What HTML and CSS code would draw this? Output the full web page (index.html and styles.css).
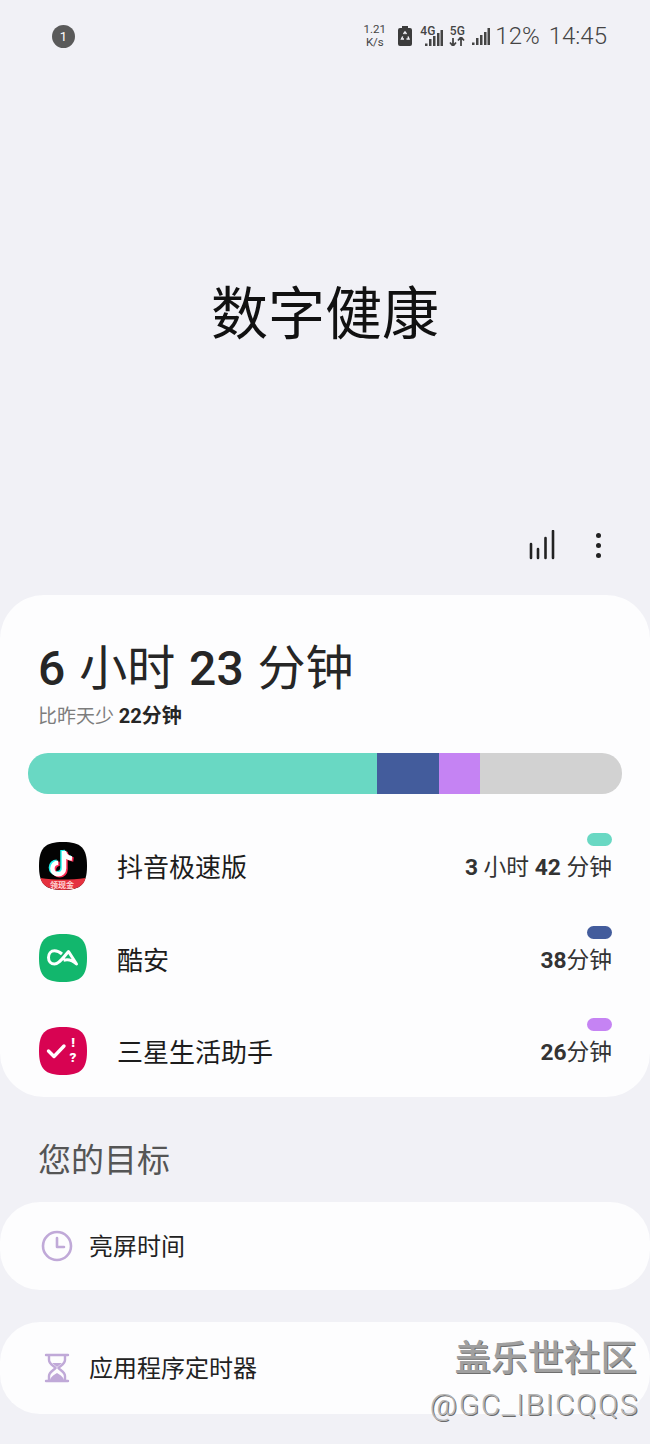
FILE: index.html
```html
<!DOCTYPE html>
<html lang="zh-CN">
<head>
    <meta charset="UTF-8">
    <meta name="viewport" content="width=device-width, initial-scale=1.0">
    <title>数字健康</title>
    <link rel="stylesheet" href="styles.css">
</head>
<body>
    <div class="status-bar">
        <div class="notice-badge">1</div>
        <div class="status-right">
            <div class="net-speed"><span>1.21</span><span>K/s</span></div>
            <svg class="battery-saver" width="14" height="20" viewBox="0 0 14 20">
                <path d="M4 0h6v2h2a2 2 0 0 1 2 2v14a2 2 0 0 1-2 2H2a2 2 0 0 1-2-2V4a2 2 0 0 1 2-2h2z" fill="#3c3c3c"/>
                <path d="M5.500 8L7 6l1.500 2M10 10.500l1 2.500H8.500M6 13H3.500l1.200-2.500" fill="none" stroke="#f1f1f6" stroke-width="1.400"/>
            </svg>
            <div class="sim-signal">
                <span class="sim-label">4G</span>
                <svg width="18" height="16" viewBox="0 0 18 16">
                    <rect x="0" y="13.500" width="2.500" height="2.500" fill="#444"/>
                    <rect x="4" y="9" width="2.500" height="7" fill="#444"/>
                    <rect x="8" y="6" width="2.500" height="10" fill="#444"/>
                    <rect x="12" y="3" width="2.500" height="13" fill="#444"/>
                    <rect x="15.500" y="0" width="2.500" height="16" fill="#444"/>
                </svg>
            </div>
            <div class="sim-five">
                <span class="sim-label">5G</span>
                <svg width="16" height="9" viewBox="0 0 16 9">
                    <path d="M4 9V1M1 5.500L4 9l3-3.500M12 0v9M9 3.500L12 0l3 3.500" fill="none" stroke="#444" stroke-width="1.800"/>
                </svg>
            </div>
            <svg class="plain-signal" width="18" height="17" viewBox="0 0 18 17">
                <rect x="0" y="14.500" width="2.500" height="2.500" fill="#444"/>
                <rect x="4" y="10" width="2.500" height="7" fill="#444"/>
                <rect x="8" y="7" width="2.500" height="10" fill="#444"/>
                <rect x="12" y="4" width="2.500" height="13" fill="#444"/>
                <rect x="15.500" y="0" width="2.500" height="17" fill="#444"/>
            </svg>
            <span class="status-text battery">12%</span>
            <span class="status-text">14:45</span>
        </div>
    </div>

    <div class="hero">
        <h1>数字健康</h1>
    </div>

    <div class="actions">
        <svg width="26" height="30" viewBox="0 0 26 30">
            <path d="M2 14v14M9 19v9M16.500 8v20M24 1v27" fill="none" stroke="#222" stroke-width="2.600" stroke-linecap="round"/>
        </svg>
        <div class="more-dots"><i></i><i></i><i></i></div>
    </div>

    <section class="card usage-card">
        <div class="total-time"><b>6</b> 小时 <b>23</b> 分钟</div>
        <div class="compare">比昨天少 <b>22分钟</b></div>

        <div class="usage-bar">
            <div class="seg seg-teal"></div>
            <div class="seg seg-blue"></div>
            <div class="seg seg-purple"></div>
            <div class="seg seg-rest"></div>
        </div>

        <div class="app-row">
            <svg class="app-icon" viewBox="0 0 48 48">
                <path d="M24 0C42 0 48 6 48 24S42 48 24 48 0 42 0 24 6 0 24 0z" fill="#030303"/>
                <path d="M1.500 36c14 2 30 2 45 0-1.500 8-9 12-22.500 12S3 44 1.500 36z" fill="#e5323f"/>
                <text x="23" y="46" class="tiktok-band">领现金</text>
                <g fill="none" stroke-width="4.500">
                    <path d="M23.500 8v17.500a5.800 5.800 0 1 1-5.800-5.800M23.500 8c.5 4.500 3.500 7 8 7.500" stroke="#25f4ee"/>
                    <path d="M26.500 10v17.500a5.800 5.800 0 1 1-5.800-5.800M26.500 10c.5 4.500 3.500 7 8 7.500" stroke="#fe2c55"/>
                    <path d="M25 9v17.500a5.800 5.800 0 1 1-5.800-5.800M25 9c.5 4.500 3.500 7 8 7.500" stroke="#fff"/>
                </g>
            </svg>
            <span class="app-name">抖音极速版</span>
            <div class="app-time">
                <i class="dot dot-teal"></i>
                <span><b>3</b> 小时 <b>42</b> 分钟</span>
            </div>
        </div>

        <div class="app-row">
            <svg class="app-icon" viewBox="0 0 48 48">
                <path d="M24 0C42 0 48 6 48 24S42 48 24 48 0 42 0 24 6 0 24 0z" fill="#12b76d"/>
                <path d="M23 20c-2.500-2.200-5-3.200-7.500-3.200-3.500 0-6 3-6 6.700s2.500 6.500 6 6.500c5 0 9-7 14-12.500l8 12.500c-4-4-8.500-5-13-3.800" fill="none" stroke="#fff" stroke-width="3" stroke-linejoin="round"/>
            </svg>
            <span class="app-name">酷安</span>
            <div class="app-time">
                <i class="dot dot-blue"></i>
                <span><b>38</b>分钟</span>
            </div>
        </div>

        <div class="app-row">
            <svg class="app-icon" viewBox="0 0 48 48">
                <path d="M24 0C42 0 48 6 48 24S42 48 24 48 0 42 0 24 6 0 24 0z" fill="#d80352"/>
                <path d="M9.500 24l5.500 5.500L25 19" fill="none" stroke="#fff" stroke-width="3.400" stroke-linecap="round" stroke-linejoin="round"/>
                <text x="34" y="20" class="samsung-mark">!</text>
                <text x="34" y="35" class="samsung-mark">?</text>
            </svg>
            <span class="app-name">三星生活助手</span>
            <div class="app-time">
                <i class="dot dot-purple"></i>
                <span><b>26</b>分钟</span>
            </div>
        </div>
    </section>

    <h2 class="section-title">您的目标</h2>

    <section class="card goal-card goal-screen">
        <svg class="goal-icon" width="32" height="32" viewBox="0 0 32 32">
            <circle cx="16" cy="16" r="14" fill="none" stroke="#c0a9d8" stroke-width="2.600"/>
            <path d="M16 8v9h7" fill="none" stroke="#c0a9d8" stroke-width="2.600" stroke-linecap="round" stroke-linejoin="round"/>
        </svg>
        <span>亮屏时间</span>
    </section>

    <section class="card goal-card goal-timer">
        <svg class="goal-icon" width="32" height="32" viewBox="0 0 32 32">
            <path d="M5 3h22M5 29h22" stroke="#c0a9d8" stroke-width="2.400" stroke-linecap="round"/>
            <path d="M8 3v5c0 4 5 6 6.500 8C13 18 8 20 8 24v5M24 3v5c0 4-5 6-6.500 8 1.500 2 6.500 4 6.500 8v5" fill="none" stroke="#c0a9d8" stroke-width="2.400"/>
            <path d="M9 29c0-4 4-6 7-8 3 2 7 4 7 8zM11 11h10l-5 4z" fill="#c0a9d8"/>
        </svg>
        <span>应用程序定时器</span>
    </section>

    <div class="watermark">
        <div class="wm-cn">盖乐世社区</div>
        <div class="wm-id">@GC_IBICQQS</div>
    </div>
</body>
</html>
```

FILE: styles.css
```css
* {
    margin: 0;
    padding: 0;
    box-sizing: border-box;
    font-family: Roboto, 'Noto Sans CJK SC', sans-serif;
}

html, body {
    height: 1444px;
    overflow: hidden;
}

body {
    position: relative;
    background-color: #f1f1f6;
    color: #1f1f1f;
}

.status-bar {
    height: 72px;
    padding: 0 43px 0 52px;
    display: flex;
    justify-content: space-between;
    align-items: center;
}

.notice-badge {
    width: 23px;
    height: 23px;
    border-radius: 50%;
    background-color: #5a5a5a;
    color: #fff;
    font-size: 13px;
    line-height: 23px;
    text-align: center;
}

.status-right {
    display: flex;
    align-items: center;
    color: #444;
}

.net-speed {
    width: 25px;
    display: flex;
    flex-direction: column;
    align-items: center;
    font-size: 11.500px;
    line-height: 13px;
    margin-right: 11px;
}

.battery-saver {
    margin-right: 8px;
}

.sim-signal {
    position: relative;
    width: 23px;
    height: 20px;
    margin-right: 6px;
    display: flex;
    align-items: flex-end;
    justify-content: flex-end;
}

.sim-label {
    font-size: 12px;
    font-weight: 500;
    line-height: 11px;
}

.sim-signal .sim-label {
    position: absolute;
    left: 0;
    top: 0;
}

.sim-five {
    width: 16px;
    margin-right: 7px;
    display: flex;
    flex-direction: column;
    align-items: center;
}

.plain-signal {
    margin-right: 5px;
}

.status-text {
    font-size: 24px;
    font-weight: 300;
}

.battery {
    margin-right: 9px;
}

.hero {
    height: 451px;
    padding-top: 207px;
    text-align: center;
}

h1 {
    font-size: 57px;
    font-weight: 400;
    line-height: 72px;
    color: #111;
}

.actions {
    height: 44px;
    margin-bottom: 28px;
    padding-right: 49px;
    display: flex;
    justify-content: flex-end;
    align-items: center;
    gap: 41px;
}

.more-dots {
    display: flex;
    flex-direction: column;
    gap: 5px;
}

.more-dots i {
    width: 5px;
    height: 5px;
    border-radius: 50%;
    background-color: #222;
}

.card {
    background-color: #fdfdfe;
}

.usage-card {
    height: 502px;
    border-radius: 44px;
    padding: 41px 28px 0;
}

.total-time {
    padding-left: 10px;
    font-size: 48px;
    line-height: 66px;
    word-spacing: 2px;
    white-space: pre;
    color: #262626;
}

.total-time b {
    font-weight: 500;
}

.compare {
    padding-left: 10px;
    margin-top: 1px;
    font-size: 19px;
    line-height: 26px;
    color: #7d7d7d;
}

.compare b {
    font-size: 20px;
    font-weight: 700;
    color: #262626;
}

.usage-bar {
    display: flex;
    height: 41px;
    margin-top: 23px;
    margin-bottom: 25.700px;
    border-radius: 20px;
    overflow: hidden;
}

.seg-teal {
    width: 349px;
    background-color: #69d8c3;
}

.seg-blue {
    width: 62px;
    background-color: #435c9c;
}

.seg-purple {
    width: 41px;
    background-color: #c583f3;
}

.seg-rest {
    flex: 1;
    background-color: #d2d2d2;
}

.app-row {
    height: 92.500px;
    padding: 0 10px 0 11px;
    display: flex;
    align-items: center;
}

.app-icon {
    width: 48px;
    height: 48px;
    margin-right: 30px;
    flex-shrink: 0;
}

.tiktok-band {
    font-size: 8px;
    font-weight: 700;
    fill: #ffd7d7;
    text-anchor: middle;
}

.samsung-mark {
    font-size: 13.500px;
    font-weight: 900;
    fill: #fff;
    text-anchor: middle;
}

.app-name {
    flex: 1;
    font-size: 26px;
    color: #1c1c1c;
}

.app-time {
    position: relative;
    font-size: 22.750px;
    color: #333;
}

.app-time b {
    font-weight: 700;
}

.dot {
    position: absolute;
    right: 0;
    top: -16px;
    width: 25px;
    height: 13px;
    border-radius: 7px;
}

.dot-teal {
    background-color: #69d8c3;
}

.dot-blue {
    background-color: #435c9c;
}

.dot-purple {
    background-color: #c583f3;
}

.section-title {
    height: 105px;
    padding: 40px 0 0 38px;
    font-size: 33px;
    font-weight: 400;
    line-height: 48px;
    color: #555;
}

.goal-card {
    display: flex;
    align-items: center;
    padding-left: 41px;
    font-size: 24px;
    color: #222;
}

.goal-card span {
    margin-bottom: 4px;
}

.goal-screen {
    height: 88px;
    border-radius: 40px;
    margin-bottom: 32px;
}

.goal-timer {
    height: 92px;
    border-radius: 40px;
}

.goal-icon {
    margin-right: 16px;
    flex-shrink: 0;
}

/* screenshot watermark, sits over the last card */
.watermark {
    position: absolute;
    right: 13px;
    top: 1336px;
    text-align: right;
}

.wm-cn {
    font-size: 36.500px;
    font-weight: 500;
    line-height: 46px;
    color: #a0a0a0;
    text-shadow: 1px 1px 0 #6f6f6f;
    white-space: nowrap;
}

.wm-id {
    margin-top: 1px;
    margin-right: -2px;
    font-size: 30px;
    font-weight: 300;
    line-height: 44px;
    letter-spacing: 1.500px;
    color: #b5b5b5;
    text-shadow: 1px 1px 0 #6a6a6a;
    white-space: nowrap;
}
```
